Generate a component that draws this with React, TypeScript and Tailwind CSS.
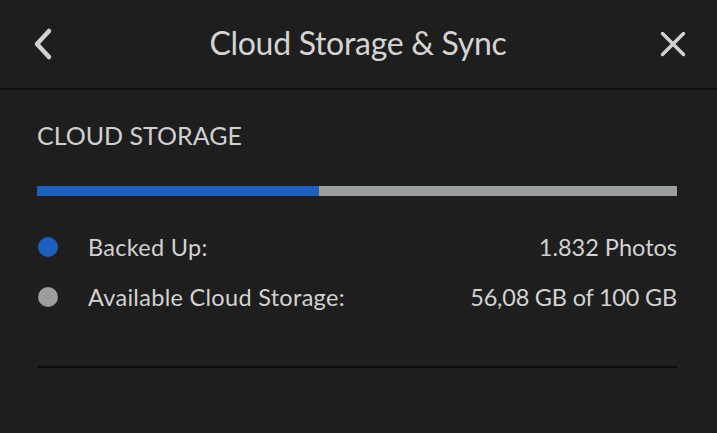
export default function App() {
  const usedPct = 44;

  return (
    <div
      className="h-[433px] w-[717px] overflow-hidden bg-[#1e1e1e] text-[#d2d2d2]"
      style={{ fontFamily: "Lato, 'Liberation Sans', sans-serif" }}
    >
      {/* Header */}
      <div className="flex h-[90px] items-center justify-between border-b-2 border-[#0e0e0e] pl-[23px] pr-[24px]">
        <button className="flex h-10 w-10 items-center justify-center" aria-label="Back">
          <svg width="24" height="34" viewBox="0 0 24 34" fill="none">
            <path
              d="M18 4 L6 17 L18 30"
              stroke="#d2d2d2"
              strokeWidth="4.5"
              strokeLinecap="round"
              strokeLinejoin="round"
            />
          </svg>
        </button>
        <h1 className="-mt-[2px] text-[32px] leading-none tracking-[-0.3px] text-[#d4d4d4]">
          Cloud Storage &amp; Sync
        </h1>
        <button className="flex h-10 w-10 items-center justify-center" aria-label="Close">
          <svg width="26" height="26" viewBox="0 0 26 26" fill="none">
            <path
              d="M2.5 2.5 L23.5 23.5 M23.5 2.5 L2.5 23.5"
              stroke="#d2d2d2"
              strokeWidth="3.5"
              strokeLinecap="round"
            />
          </svg>
        </button>
      </div>

      {/* Content */}
      <div className="pl-[37px] pr-[40px]">
        <h2 className="pt-[30px] text-[25px] leading-[30px] text-[#d0d0d0]">
          CLOUD STORAGE
        </h2>

        <div className="mt-[36px] flex h-[10px] w-full bg-[#9b9e9c]">
          <div className="h-full bg-[#1b5fbf]" style={{ width: `${usedPct}%` }} />
        </div>

        <div className="mt-[36px] flex flex-col gap-[20px] text-[23.5px] leading-[30px]">
          <div className="flex items-center justify-between">
            <div className="flex items-center">
              <span className="ml-[1px] h-[20px] w-[20px] rounded-full bg-[#1b5fbf]" />
              <span className="ml-[30px] tracking-[0.3px]">Backed Up:</span>
            </div>
            <span>1.832 Photos</span>
          </div>
          <div className="flex items-center justify-between">
            <div className="flex items-center">
              <span className="ml-[1px] h-[20px] w-[20px] rounded-full bg-[#9b9e9c]" />
              <span className="ml-[30px] tracking-[0.3px]">Available Cloud Storage:</span>
            </div>
            <span className="tracking-[-0.2px]">56,08 GB of 100 GB</span>
          </div>
        </div>

        <div className="mt-[54px] h-[2px] w-full bg-[#0c0c0c]" />
      </div>
    </div>
  );
}
